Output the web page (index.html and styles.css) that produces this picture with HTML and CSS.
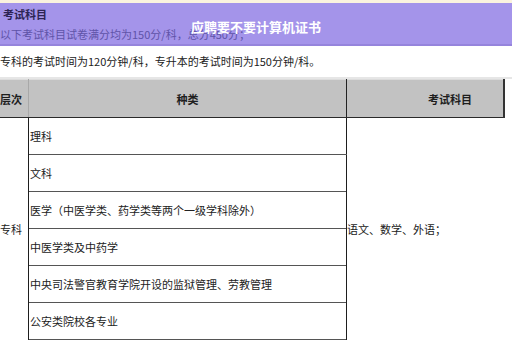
FILE: index.html
```html
<!DOCTYPE html>
<html lang="zh">
<head>
<meta charset="utf-8">
<link rel="stylesheet" href="styles.css">
</head>
<body>
<div class="page">
  <div class="strip"></div>
  <div class="band">
    <div class="band-title">考试科目</div>
    <div class="band-line">以下考试科目试卷满分均为150分/科，总分450分；</div>
    <div class="overlay">应聘要不要计算机证书</div>
  </div>
  <div class="note">专科的考试时间为120分钟/科，专升本的考试时间为150分钟/科。</div>
  <div class="sep"></div>
  <table class="grid">
    <thead>
      <tr>
        <th class="c1">层次</th>
        <th class="c2">种类</th>
        <th class="c3">考试科目</th>
      </tr>
    </thead>
    <tbody>
      <tr>
        <td class="c1" rowspan="6">专科</td>
        <td class="c2">理科</td>
        <td class="c3" rowspan="6">语文、数学、外语；</td>
      </tr>
      <tr><td class="c2">文科</td></tr>
      <tr><td class="c2">医学（中医学类、药学类等两个一级学科除外）</td></tr>
      <tr><td class="c2">中医学类及中药学</td></tr>
      <tr><td class="c2">中央司法警官教育学院开设的监狱管理、劳教管理</td></tr>
      <tr><td class="c2">公安类院校各专业</td></tr>
    </tbody>
  </table>
</div>
</body>
</html>
```

FILE: styles.css
```css
html, body {
  margin: 0;
  padding: 0;
  background: #ffffff;
}
body {
  width: 512px;
  height: 340px;
  overflow: hidden;
  font-family: "Noto Sans CJK SC", "Noto Sans", sans-serif;
  color: #222;
}
.page {
  width: 512px;
}
.strip {
  height: 3px;
  background: #fbf3df;
}
.band {
  position: relative;
  height: 41px;
  background: #a494ea;
  border-bottom: 2px solid #9584dc;
  display: flex;
  flex-direction: column;
}
.band-title {
  font-size: 11px;
  font-weight: bold;
  color: #2c2453;
  line-height: 14px;
  padding: 4px 0 0 3px;
}
.band-line {
  font-size: 11px;
  color: #5f53a8;
  line-height: 14px;
  margin-top: 6px;
}
.overlay {
  position: absolute;
  left: 0;
  right: 0;
  top: 16px;
  text-align: center;
  color: #ffffff;
  font-size: 13px;
  font-weight: bold;
  line-height: 16px;
}
.note {
  height: 31px;
  font-size: 11px;
  line-height: 14px;
  color: #222;
  padding-top: 8px;
  box-sizing: border-box;
}
.sep {
  height: 2px;
  background: #e6e6e6;
}
.grid {
  border-collapse: collapse;
  table-layout: fixed;
  width: 511px;
  margin-left: -6px;
  font-size: 11px;
}
.grid th {
  background: #c2c2c2;
  height: 37px;
  padding: 0;
  font-weight: bold;
  color: #1e1e1e;
  border-top: 1px solid #dcdcdc;
  border-bottom: 1px solid #2a2a2a;
}
.grid th.c1 { width: 34px; text-align: center; border-right: 1px solid #a8a8a8; }
.grid th.c2 { width: 317px; text-align: center; border-right: 1px solid #222; }
.grid th.c3 { text-align: center; padding-left: 50px; border-right: 2px solid #333; }
.grid td {
  padding: 0;
  height: 36px;
  vertical-align: middle;
}
.grid td.c1 {
  text-align: center;
  border-right: 1px solid #1e1e1e;
}
.grid td.c2 {
  padding-left: 1px;
  border-bottom: 1px solid #555;
}
.grid td.c3 {
  border-left: 1px solid #1e1e1e;
  padding-left: 0;
}
```
